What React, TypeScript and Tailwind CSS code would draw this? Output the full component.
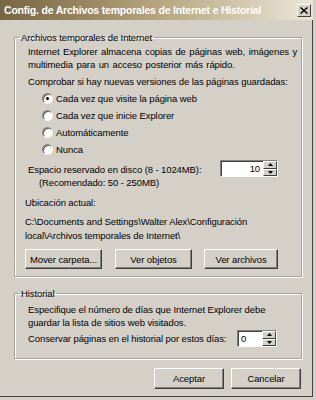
import { useState } from 'react';

const font = { fontFamily: '"Liberation Sans", Arial, sans-serif' };

const Radio = ({ label, checked, onClick }: { label: string; checked: boolean; onClick: () => void }) => (
  <div className="flex items-center gap-[3px] h-[17px] cursor-default" onClick={onClick}>
    <span className="relative w-[11px] h-[11px] rounded-full bg-white border border-[#8a8780] border-b-[#f4f2ee] border-r-[#f4f2ee] shadow-[inset_1px_1px_0_#5a5852]">
      {checked && <span className="absolute left-[3px] top-[3px] w-[3px] h-[3px] rounded-full bg-black" />}
    </span>
    <span>{label}</span>
  </div>
);

const Spinner = ({ value, width, align }: { value: string; width: string; align: 'left' | 'right' }) => (
  <div className={`flex shrink-0 h-[17px] bg-white border border-[#808080] border-b-white border-r-white ${width}`}>
    <div className={`flex-1 flex items-center px-[3px] shadow-[inset_1px_1px_0_#404040] ${align === 'right' ? 'justify-end' : 'justify-start'}`}>
      {value}
    </div>
    <div className="flex flex-col w-[14px] bg-white">
      {[0, 1].map(i => (
        <div key={i} className="flex-1 flex items-center justify-center bg-[#d4d0c8] border border-t-white border-l-white border-r-[#404040] border-b-[#404040]">
          <svg width="5" height="3" viewBox="0 0 5 3">
            <path d={i === 0 ? 'M2.5 0 L5 3 L0 3 Z' : 'M0 0 L5 0 L2.5 3 Z'} fill="#000" />
          </svg>
        </div>
      ))}
    </div>
  </div>
);

const Button = ({ children, className }: { children: React.ReactNode; className: string }) => (
  <button className={`shrink-0 whitespace-nowrap bg-[#d4d0c8] border border-t-white border-l-white border-r-[#404040] border-b-[#404040] shadow-[inset_-1px_-1px_0_#808080] ${className}`}>
    {children}
  </button>
);

export default function App() {
  const [mode, setMode] = useState(0);
  const options = ['Cada vez que visite la página web', 'Cada vez que inicie Explorer', 'Automáticamente', 'Nunca'];

  return (
    <div style={font} className="w-[316px] h-[400px] bg-[#d4d0c8] text-[9.5px] tracking-[-0.1px] text-black leading-[13px] border-r-[3px] border-b-[3px] border-[#d4d0c8] shadow-[inset_-1px_-1px_0_#404040] flex flex-col overflow-hidden whitespace-nowrap">
      <div className="h-[20px] shrink-0 flex items-center justify-between pl-[4px] pr-[2px] bg-gradient-to-r from-[#786543] via-[#b5a47e] to-[#ece7d9]">
        <span className="text-white font-bold text-[10.5px] tracking-[-0.2px]">Config. de Archivos temporales de Internet e Historial</span>
        <div className="w-[14px] h-[13px] flex items-center justify-center bg-[#d4d0c8] border border-t-white border-l-white border-r-[#404040] border-b-[#404040]">
          <svg width="8" height="7" viewBox="0 0 8 7">
            <path d="M0.5 0.5 L7.5 6.5 M7.5 0.5 L0.5 6.5" stroke="#000" strokeWidth="1.4" />
          </svg>
        </div>
      </div>

      <div className="flex-1 pl-[14px] pr-[11px] pt-[11px]">
        <fieldset className="min-w-0 border border-[#a8a49c] shadow-[1px_1px_0_white,inset_1px_1px_0_white] pl-[13px] pb-[7px]">
          <legend className="px-[2px] ml-[-9px]">Archivos temporales de Internet</legend>
          <p className="mt-[1px] [word-spacing:1px]">
            Internet Explorer almacena copias de páginas web, imágenes y<br />
            multimedia para un acceso posterior más rápido.
          </p>
          <p className="mt-[4px]">Comprobar si hay nuevas versiones de las páginas guardadas:</p>
          <div className="mt-[2px] ml-[14px] flex flex-col">
            {options.map((o, i) => (
              <Radio key={o} label={o} checked={mode === i} onClick={() => setMode(i)} />
            ))}
          </div>
          <div className="mt-[2px] flex items-start justify-between pr-[23px]">
            <div className="mt-[3px]">
              <p>Espacio reservado en disco (8 - 1024MB):</p>
              <p className="ml-[11px]">(Recomendado: 50 - 250MB)</p>
            </div>
            <Spinner value="10" width="w-[58px]" align="right" />
          </div>
          <p className="mt-[7px] ml-[-3px]">Ubicación actual:</p>
          <p className="mt-[6px] ml-[-3px] leading-[14px]">
            C:\Documents and Settings\Walter Alex\Configuración<br />
            local\Archivos temporales de Internet\
          </p>
          <div className="mt-[6px] ml-[-3px] flex">
            <Button className="w-[77px] h-[20px]">Mover carpeta...</Button>
            <Button className="ml-[13px] w-[77px] h-[20px]">Ver objetos</Button>
            <Button className="ml-[12px] w-[74px] h-[20px]">Ver archivos</Button>
          </div>
        </fieldset>

        <fieldset className="min-w-0 mt-[10px] border border-[#a8a49c] shadow-[1px_1px_0_white,inset_1px_1px_0_white] pl-[13px] pb-[11px]">
          <legend className="px-[2px] ml-[-9px]">Historial</legend>
          <p className="mt-[3px]">
            Especifique el número de días que Internet Explorer debe<br />
            guardar la lista de sitios web visitados.
          </p>
          <div className="mt-[1px] flex items-center justify-between pr-[24px]">
            <span>Conservar páginas en el historial por estos días:</span>
            <Spinner value="0" width="w-[40px]" align="left" />
          </div>
        </fieldset>

        <div className="mt-[9px] flex justify-end gap-[7px] pr-[1px]">
          <Button className="w-[70px] h-[21px]">Aceptar</Button>
          <Button className="w-[70px] h-[21px]">Cancelar</Button>
        </div>
      </div>
    </div>
  );
}
